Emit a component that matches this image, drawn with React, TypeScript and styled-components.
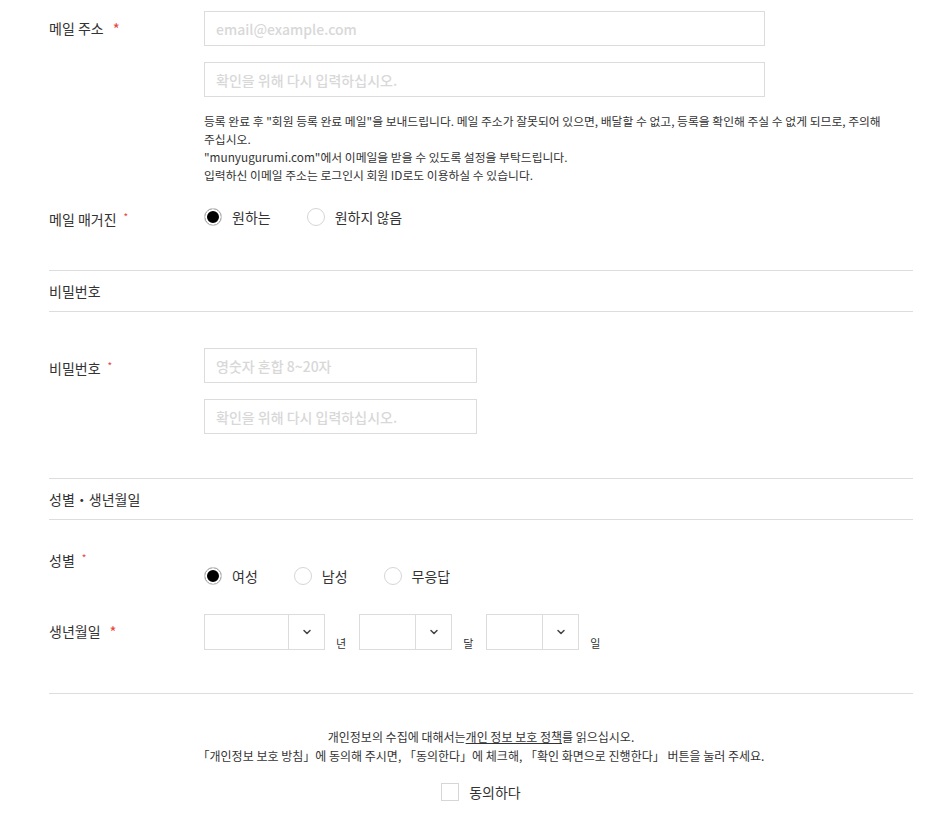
import styled, { createGlobalStyle } from "styled-components"
import { ChevronDown } from "lucide-react"

const GlobalStyle = createGlobalStyle`
    body {
        margin: 0;
        background: #fff;
        font-family: "Noto Sans CJK KR", "Noto Sans", sans-serif;
        color: #333;
    }
`

const Form = styled.div`
    width: 864px;
    padding-left: 49px;
`

const Row = styled.div<{ $top: number; $bottom: number }>`
    display: grid;
    grid-template-columns: 155px 1fr;
    padding-top: ${p => p.$top}px;
    padding-bottom: ${p => p.$bottom}px;
`

const Label = styled.div<{ $lh: number }>`
    font-size: 14px;
    line-height: ${p => p.$lh}px;
    color: #333;
`

const Star = styled.span<{ $small?: boolean }>`
    color: #e8453c;
    margin-left: ${p => (p.$small ? 7 : 9)}px;
    font-size: ${p => (p.$small ? 10 : 15)}px;
    vertical-align: ${p => (p.$small ? '4px' : '-1px')};
`

const Fields = styled.div`
    display: flex;
    flex-direction: column;
    gap: 16px;
`

const TextInput = styled.input<{ $w: number }>`
    box-sizing: border-box;
    width: ${p => p.$w}px;
    height: 35px;
    border: 1px solid #dcdcdc;
    padding: 0 11px;
    font-family: "Noto Sans CJK KR", "Open Sans", sans-serif;
    font-size: 14px;
    outline: none;
    &::placeholder {
        color: #d8d8d8;
        font-weight: 500;
    }
`

const Notes = styled.div`
    margin-top: -1px;
    font-size: 11.8px;
    line-height: 18px;
    color: #333;
    padding-right: 4px;
    word-break: keep-all;
`

const RadioGroup = styled.div<{ $offset?: number }>`
    display: flex;
    align-items: center;
    gap: 36px;
    height: 18px;
    margin-top: ${p => p.$offset || 0}px;
`

const RadioItem = styled.label`
    display: flex;
    align-items: center;
    gap: 10px;
    font-size: 14px;
    color: #333;
`

const RadioCircle = styled.span<{ $checked?: boolean }>`
    box-sizing: border-box;
    width: 18px;
    height: 18px;
    border-radius: 50%;
    border: 1px solid #d6d6d6;
    background: ${p => (p.$checked ? '#000' : '#fff')};
    box-shadow: ${p => (p.$checked ? 'inset 0 0 0 2px #fff' : 'none')};
`

const SectionHead = styled.div`
    height: 40px;
    line-height: 40px;
    border-top: 1px solid #ddd;
    border-bottom: 1px solid #ddd;
    font-size: 14px;
    color: #333;
`

const DateRow = styled.div`
    display: flex;
    align-items: flex-end;
`

const SelectBox = styled.div<{ $w: number }>`
    box-sizing: border-box;
    width: ${p => p.$w}px;
    height: 36px;
    border: 1px solid #dcdcdc;
    display: flex;
    justify-content: flex-end;
`

const SelectArrow = styled.div`
    width: 35px;
    border-left: 1px solid #dcdcdc;
    display: flex;
    align-items: center;
    justify-content: center;
    color: #444;
`

const Unit = styled.span`
    font-size: 11px;
    line-height: 14px;
    color: #333;
    margin: 0 13px 0 11px;
`

const Agreement = styled.div`
    border-top: 1px solid #ddd;
    padding-top: 33px;
    text-align: center;
    font-size: 12px;
    line-height: 19px;
    color: #333;
    a {
        color: #333;
        text-decoration: underline;
    }
`

const CheckLine = styled.label`
    display: inline-flex;
    align-items: center;
    gap: 10px;
    margin-top: 18px;
    font-size: 14px;
    line-height: 18px;
`

const CheckBox = styled.span`
    box-sizing: border-box;
    width: 18px;
    height: 18px;
    border: 1px solid #d6d6d6;
`

const Select = ({ w }: { w: number }) => (
    <SelectBox $w={w}>
        <SelectArrow>
            <ChevronDown size={12} strokeWidth={3} />
        </SelectArrow>
    </SelectBox>
)

export default function App() {
    return (
        <Form>
            <GlobalStyle />
            <Row $top={11} $bottom={0}>
                <Label $lh={35}>메일 주소<Star>*</Star></Label>
                <Fields>
                    <TextInput $w={561} placeholder="email@example.com" />
                    <TextInput $w={561} placeholder="확인을 위해 다시 입력하십시오." />
                    <Notes>
                        등록 완료 후 "회원 등록 완료 메일"을 보내드립니다. 메일 주소가 잘못되어 있으면, 배달할 수 없고, 등록을 확인해 주실 수 없게 되므로, 주의해 주십시오.<br />
                        "munyugurumi.com"에서 이메일을 받을 수 있도록 설정을 부탁드립니다.<br />
                        입력하신 이메일 주소는 로그인시 회원 ID로도 이용하실 수 있습니다.
                    </Notes>
                </Fields>
            </Row>
            <Row $top={24} $bottom={42}>
                <Label $lh={18}>메일 매거진<Star $small>*</Star></Label>
                <RadioGroup>
                    <RadioItem><RadioCircle $checked />원하는</RadioItem>
                    <RadioItem><RadioCircle />원하지 않음</RadioItem>
                </RadioGroup>
            </Row>

            <SectionHead>비밀번호</SectionHead>
            <Row $top={36} $bottom={44}>
                <Label $lh={35}>비밀번호<Star $small>*</Star></Label>
                <Fields>
                    <TextInput $w={273} type="password" placeholder="영숫자 혼합 8~20자" />
                    <TextInput $w={273} type="password" placeholder="확인을 위해 다시 입력하십시오." />
                </Fields>
            </Row>

            <SectionHead>성별・생년월일</SectionHead>
            <Row $top={28} $bottom={0}>
                <Label $lh={20}>성별<Star $small>*</Star></Label>
                <RadioGroup $offset={19}>
                    <RadioItem><RadioCircle $checked />여성</RadioItem>
                    <RadioItem><RadioCircle />남성</RadioItem>
                    <RadioItem><RadioCircle />무응답</RadioItem>
                </RadioGroup>
            </Row>
            <Row $top={29} $bottom={43}>
                <Label $lh={35}>생년월일<Star>*</Star></Label>
                <DateRow>
                    <Select w={121} />
                    <Unit>년</Unit>
                    <Select w={93} />
                    <Unit>달</Unit>
                    <Select w={93} />
                    <Unit>일</Unit>
                </DateRow>
            </Row>

            <Agreement>
                개인정보의 수집에 대해서는<a href="#">개인 정보 보호 정책</a>를 읽으십시오.<br />
                「개인정보 보호 방침」에 동의해 주시면, 「동의한다」에 체크해, 「확인 화면으로 진행한다」 버튼을 눌러 주세요.<br />
                <CheckLine><CheckBox />동의하다</CheckLine>
            </Agreement>
        </Form>
    )
}
